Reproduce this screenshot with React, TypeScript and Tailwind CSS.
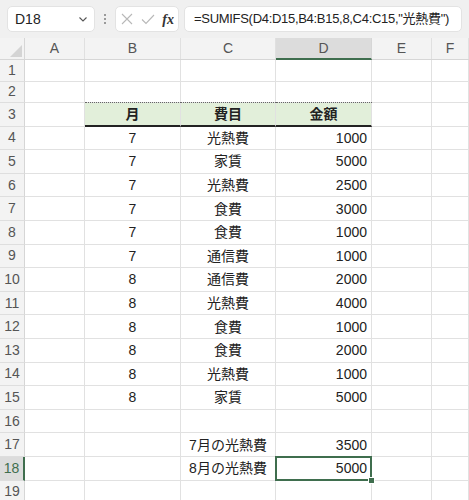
import React from "react";

const FONT = { fontFamily: '"Liberation Sans", "Noto Sans CJK JP", sans-serif' };

type Cell = { text?: string; align?: "c" | "r" | "l" };

const data: [string, string, string][] = [
  ["7", "光熱費", "1000"],
  ["7", "家賃", "5000"],
  ["7", "光熱費", "2500"],
  ["7", "食費", "3000"],
  ["7", "食費", "1000"],
  ["7", "通信費", "1000"],
  ["8", "通信費", "2000"],
  ["8", "光熱費", "4000"],
  ["8", "食費", "1000"],
  ["8", "食費", "2000"],
  ["8", "光熱費", "1000"],
  ["8", "家賃", "5000"],
];

const colW = ["w-[60px]", "w-[96px]", "w-[95px]", "w-[96px]", "w-[60px]", "flex-1"];

function Toolbar() {
  return (
    <div className="h-[38px] bg-[#f0f0f0] flex items-center px-[7px] gap-[5px]">
      <div className="w-[88px] h-[26px] bg-white border border-[#e3e3e3] rounded-[5px] flex items-center justify-between pl-[7px] pr-[6px]">
        <span className="text-[14px] text-[#222]">D18</span>
        <svg width="10" height="10" viewBox="0 0 10 10">
          <path d="M1.5 3.5 L5 7 L8.5 3.5" fill="none" stroke="#555" strokeWidth="1.1" />
        </svg>
      </div>
      <div className="w-[10px] flex flex-col items-center gap-[2px]">
        <div className="w-[2px] h-[2px] bg-[#9a9a9a]" />
        <div className="w-[2px] h-[2px] bg-[#9a9a9a]" />
        <div className="w-[2px] h-[2px] bg-[#9a9a9a]" />
      </div>
      <div className="w-[64px] h-[26px] bg-white border border-[#e3e3e3] rounded-[5px] flex items-center justify-between px-[4px]">
        <svg width="14" height="14" viewBox="0 0 14 14">
          <path d="M2 2 L12 12 M12 2 L2 12" stroke="#b8b8b8" strokeWidth="1.1" fill="none" />
        </svg>
        <svg width="16" height="14" viewBox="0 0 16 14">
          <path d="M2 7.5 L6 11.5 L14 3" stroke="#b8b8b8" strokeWidth="1.1" fill="none" />
        </svg>
        <span className="text-[14px] italic font-bold text-[#333]" style={{ fontFamily: '"Liberation Serif", serif' }}>
          fx
        </span>
      </div>
      <div className="flex-1 h-[26px] bg-white border border-[#e3e3e3] rounded-[5px] flex items-center pl-[9px] overflow-hidden whitespace-nowrap">
        <span className="text-[13px] tracking-[-0.3px] text-[#222]">=SUMIFS(D4:D15,B4:B15,8,C4:C15,"光熱費")</span>
      </div>
    </div>
  );
}

function ColHeader() {
  const letters = ["A", "B", "C", "D", "E", "F"];
  return (
    <div className="flex h-[22px] bg-[#f3f3f3] border-b border-[#d6d6d6]">
      <div className="w-[25px] border-r border-[#d6d6d6] relative overflow-hidden">
        <svg className="absolute right-[2px] bottom-[2px]" width="12" height="12" viewBox="0 0 12 12">
          <path d="M12 0 L12 12 L0 12 Z" fill="#d4d4d4" />
        </svg>
      </div>
      {letters.map((l, i) => (
        <div
          key={l}
          className={
            colW[i] +
            " flex items-center justify-center text-[14px] text-[#555] " +
            (i === 3
              ? "bg-[#dcdcdc] border-b-2 border-b-[#3f6e4e] border-r border-r-[#d6d6d6] -mb-px"
              : "border-r border-[#e0e0e0]")
          }
        >
          {l}
        </div>
      ))}
    </div>
  );
}

function getCells(r: number): Cell[] {
  if (r === 3) return [{}, { text: "月", align: "c" }, { text: "費目", align: "c" }, { text: "金額", align: "c" }, {}, {}];
  if (r >= 4 && r <= 15) {
    const d = data[r - 4];
    return [{}, { text: d[0], align: "c" }, { text: d[1], align: "c" }, { text: d[2], align: "r" }, {}, {}];
  }
  if (r === 17) return [{}, {}, { text: "7月の光熱費", align: "c" }, { text: "3500", align: "r" }, {}, {}];
  if (r === 18) return [{}, {}, { text: "8月の光熱費", align: "c" }, { text: "5000", align: "r" }, {}, {}];
  return [{}, {}, {}, {}, {}, {}];
}

function Row({ r }: { r: number }) {
  const cells = getCells(r);
  const h = r <= 2 ? "h-[21.5px]" : "h-[23.6px]";
  const selRow = r === 18;
  return (
    <div className={"flex " + h}>
      <div
        className={
          "w-[25px] shrink-0 flex items-center justify-center text-[14px] border-b border-[#dedede] " +
          (selRow ? "bg-[#dcdcdc] text-[#3f6e4e] border-r-2 border-r-[#3f6e4e]" : "bg-[#f3f3f3] text-[#555] border-r border-r-[#d6d6d6]")
        }
      >
        {r}
      </div>
      {cells.map((c, i) => {
        const inTable = r === 3 && i >= 1 && i <= 3;
        const sel = r === 18 && i === 3;
        let cls = colW[i] + " relative flex items-center text-[14px] text-[#222] border-r border-[#e1e1e1] ";
        if (inTable) cls += "bg-[#e2efda] font-bold border-b-2 border-b-[#222] ";
        else cls += "border-b border-[#e1e1e1] ";
        if (c.align === "c") cls += "justify-center ";
        if (c.align === "r") cls += "justify-end pr-[4px] ";
        return (
          <div key={i} className={cls}>
            {inTable && (
              <div className="absolute left-0 -right-px -top-px h-0 border-t border-dotted border-[#666] z-10" />
            )}
            {c.text && <span className="leading-none">{c.text}</span>}
            {sel && (
              <>
                <div className="absolute -left-[1px] -top-[1px] -right-[1px] -bottom-[1px] border-2 border-[#3f6e4e] pointer-events-none z-10" />
                <div className="absolute -right-[4px] -bottom-[4px] w-[7px] h-[7px] bg-[#3f6e4e] border border-white z-20" />
              </>
            )}
          </div>
        );
      })}
    </div>
  );
}

export default function App() {
  const rows = Array.from({ length: 19 }, (_, i) => i + 1);
  return (
    <div className="w-[469px] h-[500px] overflow-hidden bg-white" style={FONT}>
      <Toolbar />
      <ColHeader />
      {rows.map((r) => (
        <Row key={r} r={r} />
      ))}
    </div>
  );
}
